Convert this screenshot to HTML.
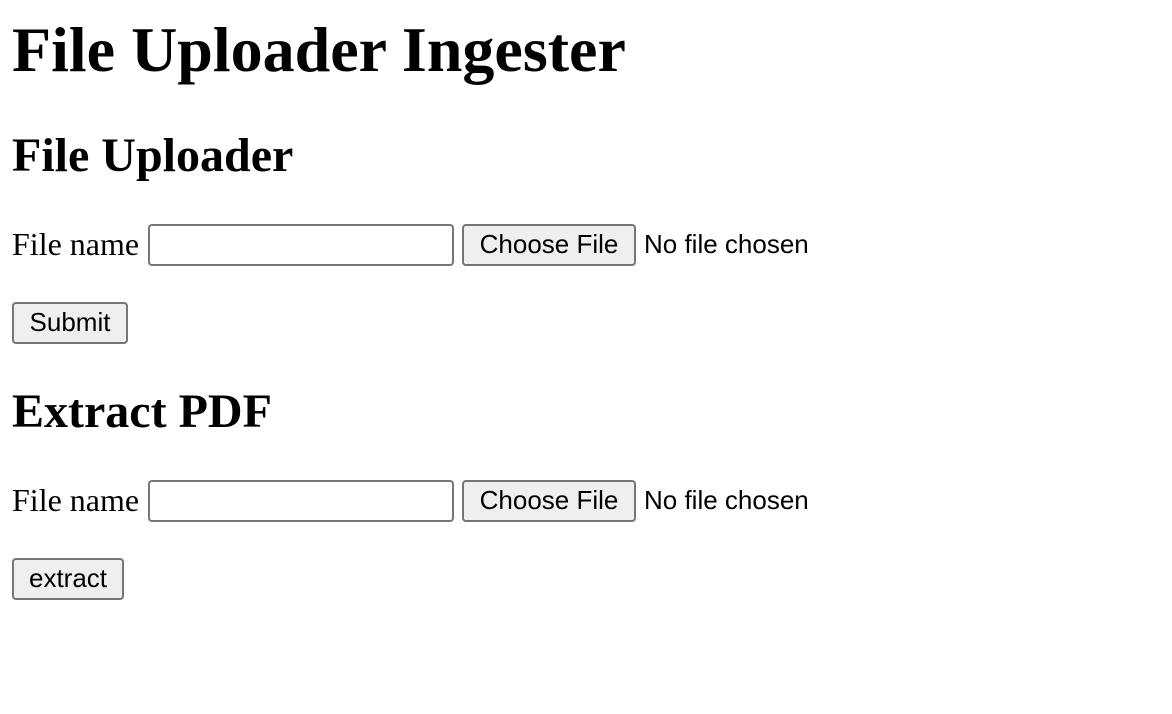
<!DOCTYPE html>
<html><head><meta charset="utf-8"><style>
html,body{margin:0;padding:0;background:#fff;width:1172px;height:714px;overflow:hidden;position:relative}
.s{position:absolute;font-family:"Liberation Serif",serif;line-height:1;white-space:nowrap;color:#000}
.h1{font-size:64px;font-weight:bold}
.h2{font-size:48px;font-weight:bold}
.t{font-size:32px}
.box{position:absolute;box-sizing:border-box;border:2px solid #767676;border-radius:4px}
.btn{background:#efefef;display:flex;align-items:center;justify-content:center;font-family:"Liberation Sans",sans-serif;font-size:26px;color:#000;padding-bottom:2px}
.lbl{position:absolute;font-family:"Liberation Sans",sans-serif;font-size:26px;line-height:41px;white-space:nowrap}
</style></head><body>
<div class="s h1" style="left:12px;top:18px">File Uploader Ingester</div>
<div class="s h2" style="left:12px;top:132px">File Uploader</div>
<div class="s t" style="left:12px;top:228px">File name</div>
<div class="box" style="left:148px;top:224px;width:306px;height:42px"></div>
<div class="box btn" style="left:462px;top:224px;width:174px;height:42px">Choose File</div>
<div class="lbl" style="left:644px;top:224px">No file chosen</div>
<div class="box btn" style="left:12px;top:302px;width:116px;height:42px">Submit</div>
<div class="s h2" style="left:12px;top:388px">Extract PDF</div>
<div class="s t" style="left:12px;top:484px">File name</div>
<div class="box" style="left:148px;top:480px;width:306px;height:42px"></div>
<div class="box btn" style="left:462px;top:480px;width:174px;height:42px">Choose File</div>
<div class="lbl" style="left:644px;top:480px">No file chosen</div>
<div class="box btn" style="left:12px;top:558px;width:112px;height:42px">extract</div>
</body></html>
